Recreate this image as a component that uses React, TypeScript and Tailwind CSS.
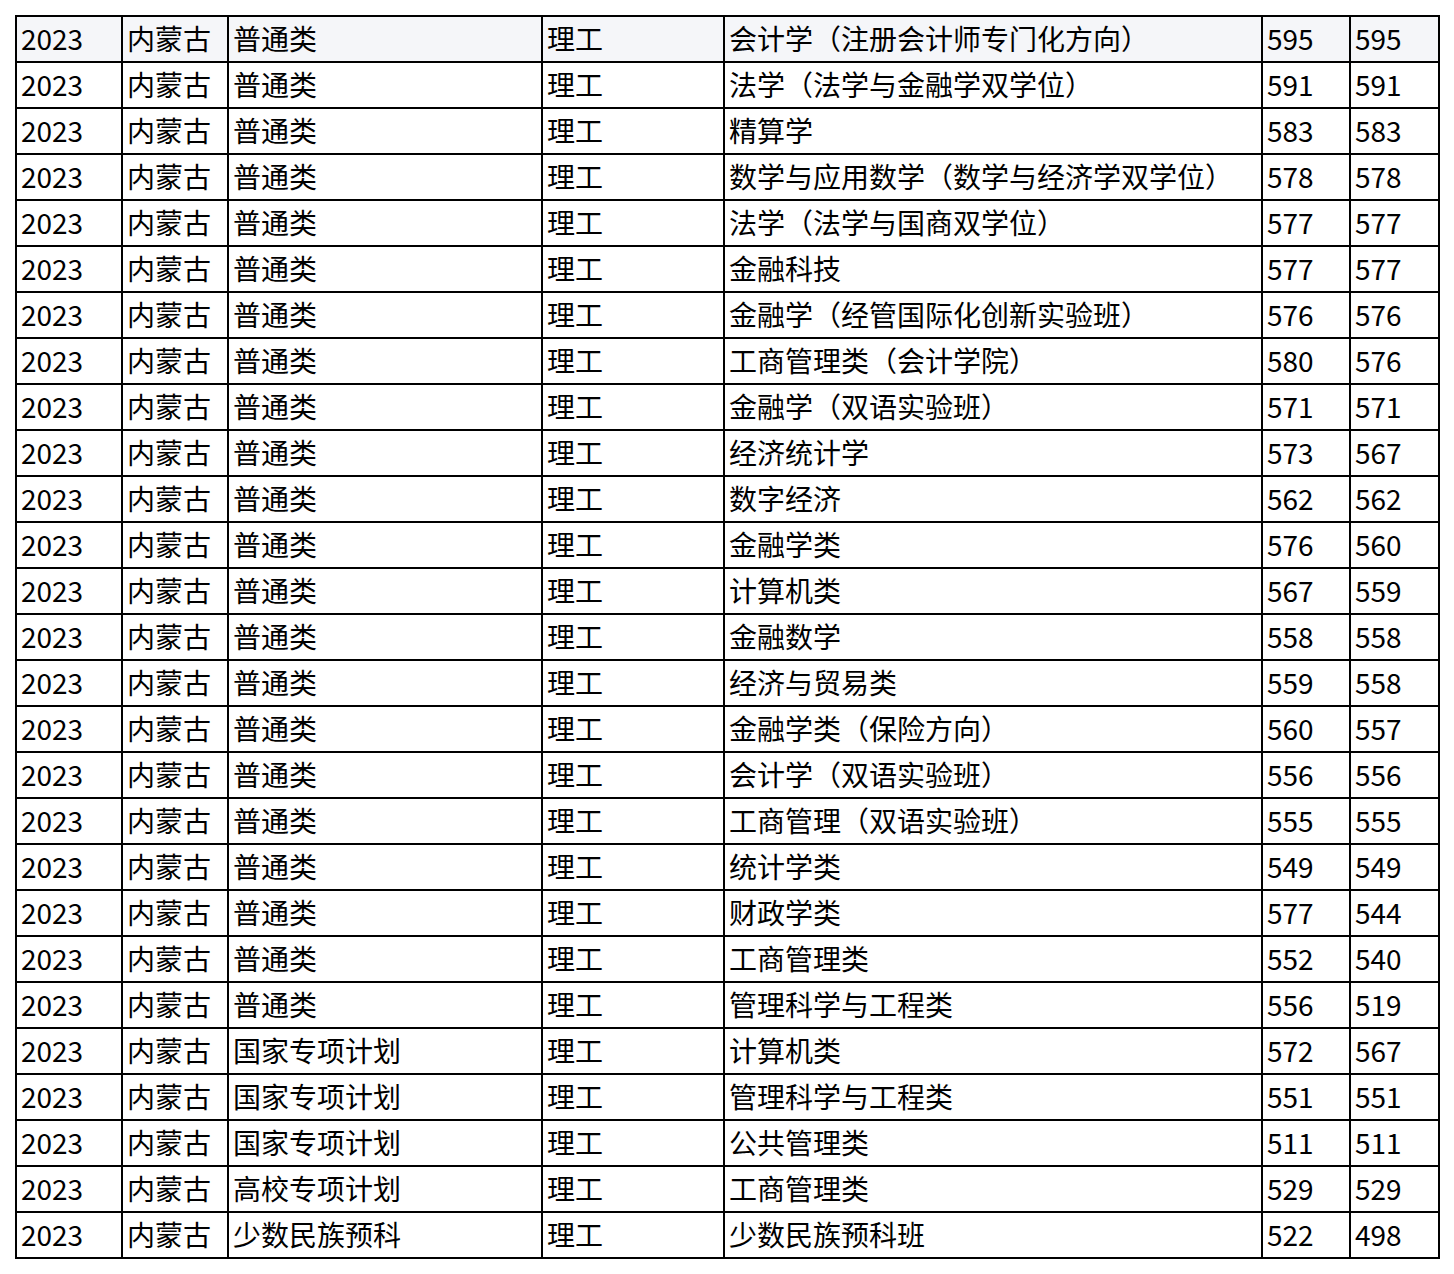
const rows: [string, string, string, string][] = [
  ["普通类", "会计学（注册会计师专门化方向）", "595", "595"],
  ["普通类", "法学（法学与金融学双学位）", "591", "591"],
  ["普通类", "精算学", "583", "583"],
  ["普通类", "数学与应用数学（数学与经济学双学位）", "578", "578"],
  ["普通类", "法学（法学与国商双学位）", "577", "577"],
  ["普通类", "金融科技", "577", "577"],
  ["普通类", "金融学（经管国际化创新实验班）", "576", "576"],
  ["普通类", "工商管理类（会计学院）", "580", "576"],
  ["普通类", "金融学（双语实验班）", "571", "571"],
  ["普通类", "经济统计学", "573", "567"],
  ["普通类", "数字经济", "562", "562"],
  ["普通类", "金融学类", "576", "560"],
  ["普通类", "计算机类", "567", "559"],
  ["普通类", "金融数学", "558", "558"],
  ["普通类", "经济与贸易类", "559", "558"],
  ["普通类", "金融学类（保险方向）", "560", "557"],
  ["普通类", "会计学（双语实验班）", "556", "556"],
  ["普通类", "工商管理（双语实验班）", "555", "555"],
  ["普通类", "统计学类", "549", "549"],
  ["普通类", "财政学类", "577", "544"],
  ["普通类", "工商管理类", "552", "540"],
  ["普通类", "管理科学与工程类", "556", "519"],
  ["国家专项计划", "计算机类", "572", "567"],
  ["国家专项计划", "管理科学与工程类", "551", "551"],
  ["国家专项计划", "公共管理类", "511", "511"],
  ["高校专项计划", "工商管理类", "529", "529"],
  ["少数民族预科", "少数民族预科班", "522", "498"],
];

// 2px black grid, row pitch 46px, first row tinted
const cell = "border-2 border-black h-[46px] pl-[4px] pr-1 pt-0 pb-[3px] align-middle whitespace-nowrap leading-none";

export default function App() {
  return (
    <div
      className="min-h-[1274px] w-[1454px] bg-white pt-[15px] pl-[15px] text-black"
      style={{ fontFamily: '"Noto Sans CJK SC", "Noto Sans", sans-serif' }}
    >
      <table className="table-fixed border-collapse w-[1423px] text-[28px]">
        <colgroup>
          <col className="w-[106px]" />
          <col className="w-[106px]" />
          <col className="w-[314px]" />
          <col className="w-[182px]" />
          <col className="w-[538px]" />
          <col className="w-[88px]" />
          <col className="w-[89px]" />
        </colgroup>
        <tbody>
          {rows.map((r, i) => (
            <tr key={i} className={i === 0 ? "bg-[#f5f6f9]" : "bg-white"}>
              <td className={cell}>2023</td>
              <td className={cell}>内蒙古</td>
              <td className={cell}>{r[0]}</td>
              <td className={cell}>理工</td>
              <td className={cell}>{r[1]}</td>
              <td className={cell}>{r[2]}</td>
              <td className={cell}>{r[3]}</td>
            </tr>
          ))}
        </tbody>
      </table>
    </div>
  );
}
